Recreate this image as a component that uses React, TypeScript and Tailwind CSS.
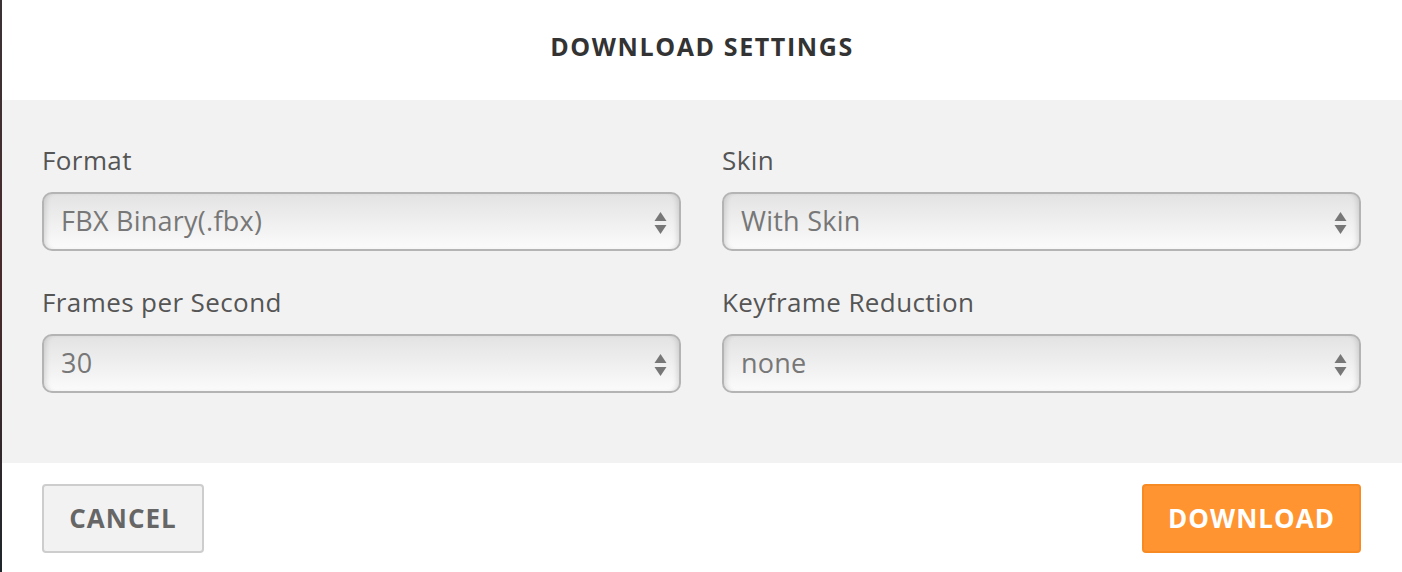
import { useState } from 'react'

const font = { fontFamily: '"Open Sans", "Liberation Sans", sans-serif' }

function Field({ label, value, options, onChange }: { label: string; value: string; options: string[]; onChange: (v: string) => void }) {
  return (
    <div className="flex flex-col">
      <label className="h-8 text-[26px] leading-8 tracking-[0.4px] text-[#555]">{label}</label>
      <div className="relative mt-4">
        <select
          value={value}
          onChange={(e) => onChange(e.target.value)}
          className="h-[59px] w-full appearance-none rounded-[10px] border-2 border-[#b4b4b4] bg-linear-to-b from-[#e3e3e3] to-[#fbfbfb] pl-[17px] text-[27px] tracking-[0.25px] text-[#777] shadow-[inset_5px_0_5px_-3px_rgba(0,0,0,0.12),inset_-5px_0_5px_-3px_rgba(0,0,0,0.12)] outline-none"
        >
          {options.map((o) => (
            <option key={o}>{o}</option>
          ))}
        </select>
        {/* up/down arrows */}
        <svg className="pointer-events-none absolute right-[14px] top-[19px]" width="13" height="24" viewBox="0 0 13 24">
          <path d="M6.5 1 L12.5 10 H0.5 Z" fill="#777" />
          <path d="M0.5 14 H12.5 L6.5 23 Z" fill="#777" />
        </svg>
      </div>
    </div>
  )
}

export default function App() {
  const [format, setFormat] = useState('FBX Binary(.fbx)')
  const [skin, setSkin] = useState('With Skin')
  const [fps, setFps] = useState('30')
  const [reduction, setReduction] = useState('none')

  return (
    <div className="flex h-[572px] w-full overflow-hidden" style={font}>
      {/* page behind the modal */}
      <div className="w-[2px] bg-linear-to-b from-[#3a3236] via-[#4a2a2c] to-[#1e262c]" />

      <div className="flex flex-1 flex-col bg-white">
        <div className="flex h-[100px] items-center justify-center pb-[6px]">
          <h2 className="text-[25px] font-bold tracking-[1.6px] text-[#333]">DOWNLOAD SETTINGS</h2>
        </div>

        <div className="grid grid-cols-2 gap-x-[41px] gap-y-[35px] bg-[#f2f2f2] pb-[70px] pl-10 pr-[41px] pt-11">
          <Field label="Format" value={format} onChange={setFormat} options={['FBX Binary(.fbx)', 'FBX ASCII(.fbx)', 'BVH(.bvh)']} />
          <Field label="Skin" value={skin} onChange={setSkin} options={['With Skin', 'Without Skin']} />
          <Field label="Frames per Second" value={fps} onChange={setFps} options={['30', '24', '60']} />
          <Field label="Keyframe Reduction" value={reduction} onChange={setReduction} options={['none', 'uniform']} />
        </div>

        <div className="flex items-start justify-between pl-10 pr-[41px] pt-[21px]">
          <button className="h-[69px] w-[162px] rounded-[4px] border-2 border-[#cdcdcd] bg-[#f2f2f2] text-[26px] font-bold tracking-[1px] text-[#666]">
            CANCEL
          </button>
          <button className="h-[69px] w-[219px] rounded-[4px] border-2 border-[#f88a24] bg-[#ff9430] text-[26px] font-bold tracking-[1px] text-white">
            DOWNLOAD
          </button>
        </div>
      </div>
    </div>
  )
}
